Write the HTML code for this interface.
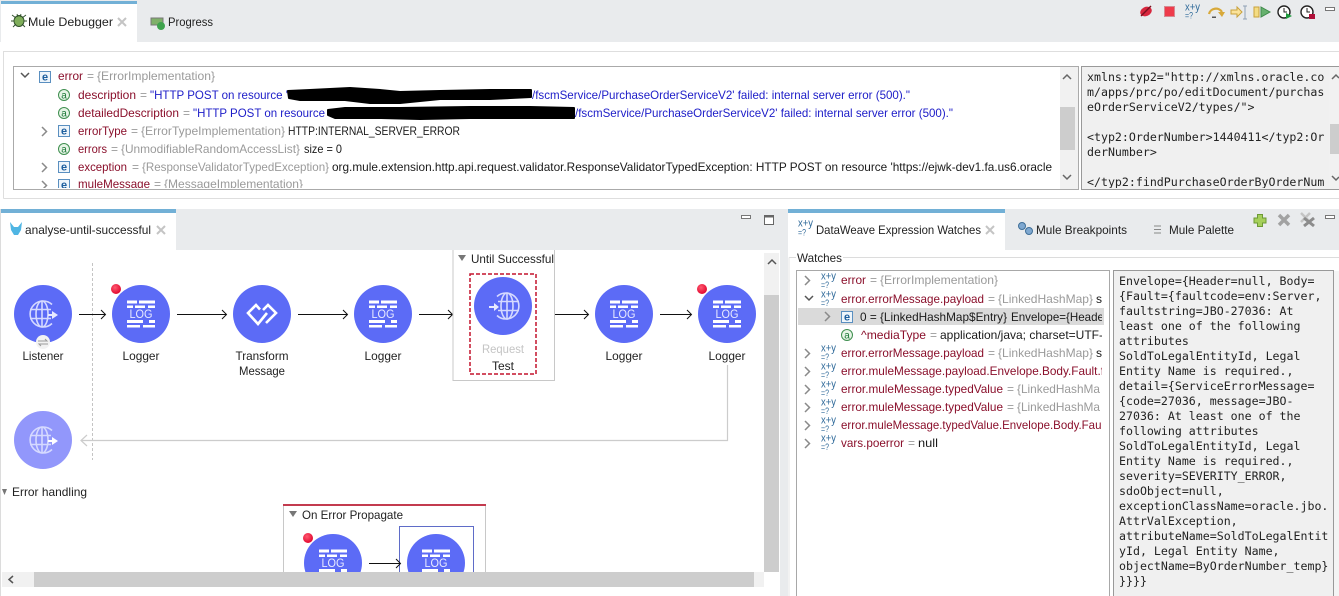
<!DOCTYPE html>
<html><head><meta charset="utf-8"><title>Mule Debugger</title>
<style>
html,body{margin:0;padding:0;background:#fff;width:1339px;height:596px;overflow:hidden}
svg{display:block}
text{font-family:"Liberation Sans",sans-serif;font-size:12px;fill:#222;white-space:pre}
.m{font-family:"DejaVu Sans Mono","Liberation Mono",monospace;font-size:11.6px;fill:#222}
.r{fill:#8a0f2b}.g{fill:#9a9a9a}.b{fill:#1c1cc8}.k{fill:#1a1a1a}
.e{font-size:11px;font-weight:bold;fill:#1e5f9e;text-anchor:middle}
.a{font-size:10px;fill:#1f7a3a;text-anchor:middle}
.x{font-size:11px;fill:#2f6a9a}
.q{font-size:9.5px;fill:#2f6a9a}
.log{font-size:11.5px;fill:#e8eaff;text-anchor:middle}
.c{text-anchor:middle}
.chev{fill:none;stroke:#8a8a8a;stroke-width:1.5}
</style></head><body>
<svg width="1339" height="596" viewBox="0 0 1339 596" xmlns="http://www.w3.org/2000/svg">
<defs>
<clipPath id="t1"><rect x="14" y="67" width="1045" height="121"/></clipPath>
<clipPath id="t2"><rect x="1082" y="67" width="246" height="121"/></clipPath>
<clipPath id="t3"><rect x="797" y="271" width="305" height="324"/></clipPath>
<radialGradient id="rd" cx="40%" cy="35%" r="70%"><stop offset="0" stop-color="#ff5a70"/><stop offset="1" stop-color="#e0002a"/></radialGradient>
<g id="bars" fill="#fff">
<rect x="-14" y="-13.5" width="10" height="3"/><rect x="-2" y="-13.5" width="16" height="3"/>
<rect x="-14" y="-8.5" width="6" height="2.5"/><rect x="-6" y="-8.5" width="10" height="2.5"/><rect x="7" y="-8.5" width="7" height="2.5"/>
<rect x="-14" y="6" width="16" height="3"/><rect x="8" y="6" width="6" height="3"/>
<rect x="-14" y="11" width="13" height="2.5"/><rect x="2" y="11" width="12" height="2.5"/>
</g>
<g id="globe" fill="none" stroke="#d5d9ff" stroke-width="1.6">
<path d="M9 -9.5A13 13 0 1 0 9 9.5"/>
<ellipse cx="-1" cy="0" rx="6" ry="13"/>
<path d="M-1 -13V13M-13 -4.5H8M-13 4.5H8"/>
</g>
</defs>

<!-- top tab bar -->
<rect x="0" y="0" width="1339" height="42" fill="#e9ebed"/>
<rect x="1" y="1" width="136" height="41" fill="#fff"/>
<rect x="1" y="1" width="136" height="3" fill="#72b0d6"/>
<g fill="#7fae5a" stroke="#2f4f2a" stroke-width=".9"><ellipse cx="19" cy="21" rx="5" ry="5.500"/><path d="M12 15l4 3M26 15l-4 3M11 21h3M27 21h-3M13 27l3-3M25 27l-3-3M17 14l1 3M21 14l-1 3" fill="none"/></g>
<text x="28" y="26" textLength="85" lengthAdjust="spacingAndGlyphs">Mule Debugger</text>
<path d="M118 18l8 8M126 18l-8 8" stroke="#c4c4c4" stroke-width="2"/>
<rect x="151" y="18" width="12" height="7" fill="#7fb069" stroke="#777"/><circle cx="161" cy="26" r="4" fill="#3fa34d"/>
<text x="168" y="26" textLength="45" lengthAdjust="spacingAndGlyphs">Progress</text>

<!-- debug toolbar -->
<ellipse cx="1146" cy="11.500" rx="6" ry="4.500" fill="#d7263d" transform="rotate(-25 1146 11.500)"/><path d="M1141 16l10-10" stroke="#7a1020" stroke-width="1.400"/>
<rect x="1164.500" y="6.500" width="10" height="10" fill="#ee3b4b" stroke="#d58a92"/>
<text class="x" x="1185" y="10.500" textLength="15" lengthAdjust="spacingAndGlyphs">x+y</text>
<text class="q" x="1185" y="18.500" textLength="8" lengthAdjust="spacingAndGlyphs">=?</text>
<path d="M1209 14a7 6.500 0 0 1 13 -2" fill="none" stroke="#d8a93a" stroke-width="2.200"/><path d="M1218 12h7l-3 5z" fill="#d8a93a"/><rect x="1212" y="16.500" width="4" height="1.500" fill="#555"/>
<path d="M1231 10h6v-3l5 5-5 5v-3h-6z" fill="#fbe39a" stroke="#c9a23c"/><path d="M1243 6h4M1243 19h4M1245 6v13" fill="none" stroke="#8fa0b5"/>
<rect x="1254" y="7" width="5" height="10" fill="#f4dc84" stroke="#c9a23c"/><path d="M1261 7l9 5-9 5z" fill="#66b16e" stroke="#3f8a4a"/>
<circle cx="1284" cy="12" r="6" fill="#fff" stroke="#222" stroke-width="1.400"/><path d="M1284 8v4h3" fill="none" stroke="#222"/><path d="M1286 13l6 3-6 3z" fill="#1f9a3d"/>
<circle cx="1307" cy="12" r="6" fill="#fff" stroke="#222" stroke-width="1.400"/><path d="M1307 8v4h3" fill="none" stroke="#222"/><rect x="1309" y="14" width="6" height="5" fill="#b0103a"/>
<rect x="1325.500" y="7.500" width="9" height="3" fill="#fff" stroke="#777"/>

<!-- top panel -->
<rect x="0" y="42" width="1339" height="167" fill="#fff"/>
<path d="M3.500 198.500V51.500H1339M3.500 198.500H1339" fill="none" stroke="#dedede"/>
<rect x="13.500" y="66.500" width="1065" height="123" fill="#fff" stroke="#aaa"/>
<rect x="1060" y="67" width="18" height="122" fill="#f1f1f1"/>
<rect x="1060" y="107" width="15" height="43" fill="#cdcdcd"/>
<path d="M1063 79l4-4 4 4M1063 175l4 4 4-4" fill="none" stroke="#666" stroke-width="1.500"/>

<g clip-path="url(#t1)">
<path d="M21 73l4 4 4-4" class="chev" style="stroke:#555"/>
<rect x="39.500" y="71.500" width="11" height="11" fill="#eef5fb" stroke="#5a8fc0"/><text class="e" x="45" y="80.500">e</text>
<text class="r" x="58" y="80" textLength="25" lengthAdjust="spacingAndGlyphs">error</text><text class="g" x="87" y="80">=</text><text class="g" x="97" y="80" textLength="118" lengthAdjust="spacingAndGlyphs">{ErrorImplementation}</text>

<circle cx="64" cy="95" r="5.500" fill="#e6f4e6" stroke="#3f8f4f"/><text class="a" x="64" y="98.500">a</text>
<text class="r" x="78" y="99" textLength="58" lengthAdjust="spacingAndGlyphs">description</text><text class="g" x="140" y="99">=</text>
<text class="b" x="150" y="99" textLength="138" lengthAdjust="spacingAndGlyphs">"HTTP POST on resource '</text>
<text class="b" x="532" y="99" textLength="378" lengthAdjust="spacingAndGlyphs">/fscmService/PurchaseOrderServiceV2' failed: internal server error (500)."</text>

<circle cx="64" cy="113" r="5.500" fill="#e6f4e6" stroke="#3f8f4f"/><text class="a" x="64" y="116.500">a</text>
<text class="r" x="78" y="117" textLength="101" lengthAdjust="spacingAndGlyphs">detailedDescription</text><text class="g" x="183" y="117">=</text>
<text class="b" x="193" y="117" textLength="132" lengthAdjust="spacingAndGlyphs">"HTTP POST on resource</text>
<text class="b" x="575" y="117" textLength="378" lengthAdjust="spacingAndGlyphs">/fscmService/PurchaseOrderServiceV2' failed: internal server error (500)."</text>

<path d="M42 127l4.500 4.500-4.500 4.500" class="chev"/>
<rect x="58.500" y="125.500" width="11" height="11" fill="#eef5fb" stroke="#5a8fc0"/><text class="e" x="64" y="134.500">e</text>
<text class="r" x="78" y="135" textLength="49" lengthAdjust="spacingAndGlyphs">errorType</text><text class="g" x="131" y="135">=</text><text class="g" x="141" y="135" textLength="144" lengthAdjust="spacingAndGlyphs">{ErrorTypeImplementation}</text>
<text class="k" x="288" y="135" textLength="172" lengthAdjust="spacingAndGlyphs">HTTP:INTERNAL_SERVER_ERROR</text>

<circle cx="64" cy="149" r="5.500" fill="#e6f4e6" stroke="#3f8f4f"/><text class="a" x="64" y="152.500">a</text>
<text class="r" x="78" y="153" textLength="29" lengthAdjust="spacingAndGlyphs">errors</text><text class="g" x="111" y="153">=</text><text class="g" x="121" y="153" textLength="179" lengthAdjust="spacingAndGlyphs">{UnmodifiableRandomAccessList}</text>
<text class="k" x="304" y="153" textLength="38" lengthAdjust="spacingAndGlyphs">size = 0</text>

<path d="M42 163l4.500 4.500-4.500 4.500" class="chev"/>
<rect x="58.500" y="161.500" width="11" height="11" fill="#eef5fb" stroke="#5a8fc0"/><text class="e" x="64" y="170.500">e</text>
<text class="r" x="78" y="171" textLength="49" lengthAdjust="spacingAndGlyphs">exception</text><text class="g" x="132" y="171">=</text><text class="g" x="142" y="171" textLength="187" lengthAdjust="spacingAndGlyphs">{ResponseValidatorTypedException}</text>
<text class="k" x="332" y="171" textLength="720" lengthAdjust="spacingAndGlyphs">org.mule.extension.http.api.request.validator.ResponseValidatorTypedException: HTTP POST on resource 'https://ejwk-dev1.fa.us6.oracle</text>

<path d="M42 181l4.500 4.500-4.500 4.500" class="chev"/>
<rect x="58.500" y="179.500" width="11" height="11" fill="#eef5fb" stroke="#5a8fc0"/><text class="e" x="64" y="188.500">e</text>
<text class="r" x="78" y="188" textLength="72" lengthAdjust="spacingAndGlyphs">muleMessage</text><text class="g" x="154" y="188">=</text><text class="g" x="164" y="188" textLength="139" lengthAdjust="spacingAndGlyphs">{MessageImplementation}</text>
</g>

<path d="M288 91L310 90L350 88L380 90L400 92L440 91L490 90L531 90L531 97L490 99L440 99L400 103L370 103L345 100L300 100L289 98Z" fill="#000" stroke="#000" stroke-width="2" stroke-linejoin="round"/>
<path d="M328 110L345 108L400 108L470 107L530 107L574 108L574 118L530 118L470 118L420 119L380 118L335 118L328 115Z" fill="#000" stroke="#000" stroke-width="2" stroke-linejoin="round"/>

<rect x="1081.500" y="66.500" width="257.500" height="123" fill="#f0f0f0" stroke="#999"/>
<g clip-path="url(#t2)">
<text class="m" x="1087" y="81">xmlns:typ2="http://xmlns.oracle.co</text>
<text class="m" x="1087" y="96">m/apps/prc/po/editDocument/purchas</text>
<text class="m" x="1087" y="111">eOrderServiceV2/types/"&gt;</text>
<text class="m" x="1087" y="141">&lt;typ2:OrderNumber&gt;1440411&lt;/typ2:Or</text>
<text class="m" x="1087" y="156">derNumber&gt;</text>
<text class="m" x="1087" y="186">&lt;/typ2:findPurchaseOrderByOrderNum</text>
</g>
<rect x="1329" y="67" width="10" height="122" fill="#f1f1f1"/>
<rect x="1330" y="124" width="9" height="30" fill="#cdcdcd"/>
<path d="M1332 79l4-4 3 3M1332 176l4 4 3-3" fill="none" stroke="#666" stroke-width="1.500"/>

<!-- editor tabs -->
<rect x="0" y="209" width="1339" height="387" fill="#e9ebed"/>
<rect x="0" y="209" width="1" height="387" fill="#dcdcdc"/>
<rect x="1" y="209" width="175" height="41" fill="#fff"/>
<rect x="1" y="209" width="175" height="4" fill="#72b0d6"/>
<path d="M10 222l4 5h4l4-5-1 8-3 5h-4l-3-5z" fill="#4fb5e3"/>
<text x="25" y="234" textLength="126" lengthAdjust="spacingAndGlyphs">analyse-until-successful</text>
<path d="M157 226l8 8M165 226l-8 8" stroke="#c4c4c4" stroke-width="2"/>
<rect x="741.500" y="215.500" width="9" height="3" fill="#fff" stroke="#777"/>
<rect x="764.500" y="215.500" width="9" height="9" fill="#fff" stroke="#666"/><rect x="764" y="215" width="10" height="2.500" fill="#666"/>

<!-- canvas -->
<rect x="1" y="250" width="779" height="346" fill="#fff"/>
<rect x="764" y="253" width="15" height="319" fill="#f1f1f1"/>
<rect x="764" y="295" width="15" height="277" fill="#cdcdcd"/>
<path d="M768 264l4-4 4 4" fill="none" stroke="#555" stroke-width="1.500"/>

<line x1="92.500" y1="263" x2="92.500" y2="460" stroke="#c4c4c4" stroke-dasharray="3 2"/>
<path d="M727.500 365V440.500H81" fill="none" stroke="#cccccc" stroke-width="1.200"/>
<path d="M87 435l-6 5.500 6 5.500" fill="none" stroke="#cccccc" stroke-width="1.200"/>

<!-- arrows -->
<g fill="none" stroke="#111" stroke-width="1">
<path d="M79 314.500H105M101 310l4.500 4.500-4.500 4.500"/>
<path d="M177 314.500H226M222 310l4.500 4.500-4.500 4.500"/>
<path d="M298 314.500H347M343 310l4.500 4.500-4.500 4.500"/>
<path d="M419 314.500H452M448 310l4.500 4.500-4.500 4.500"/>
<path d="M555 314.500H588M584 310l4.500 4.500-4.500 4.500"/>
<path d="M660 314.500H691M687 310l4.500 4.500-4.500 4.500"/>
</g>

<!-- until successful frame -->
<path d="M453 250V380.500H554.500V250" fill="none" stroke="#c8c8c8" stroke-width="1"/>
<path d="M458 255h8l-4 6z" fill="#777"/>
<text x="471" y="263" textLength="83" lengthAdjust="spacingAndGlyphs">Until Successful</text>
<rect x="470" y="274" width="66" height="100" fill="none" stroke="#c3142d" stroke-width="1.500" stroke-dasharray="4 2"/>

<!-- nodes -->
<circle cx="43" cy="314" r="29" fill="#5c6bf6"/>
<use href="#globe" x="43" y="314"/><path d="M48 314h4v-3l6 4-6 4v-3h-4z" fill="#e8eaff"/>
<circle cx="43" cy="342" r="7" fill="#f2f2f2"/><path d="M38 341h9l-2-2M48 344h-9l2 2" fill="none" stroke="#999"/>
<text class="c" x="43" y="360" textLength="41" lengthAdjust="spacingAndGlyphs">Listener</text>

<circle cx="141" cy="314" r="29" fill="#5c6bf6"/><use href="#bars" x="141" y="314"/><text class="log" x="141" y="318" textLength="23" lengthAdjust="spacingAndGlyphs">LOG</text>
<text class="c" x="141" y="360" textLength="37" lengthAdjust="spacingAndGlyphs">Logger</text>
<circle cx="116" cy="289" r="5" fill="url(#rd)"/>

<circle cx="262" cy="314" r="29" fill="#5c6bf6"/>
<path d="M260 309.500L256 305L248 313L258 324L267 313M266 323L276 313L268 305L263 310" fill="none" stroke="#fff" stroke-width="2.600"/>
<text class="c" x="262" y="360" textLength="53" lengthAdjust="spacingAndGlyphs">Transform</text>
<text class="c" x="262" y="375" textLength="46" lengthAdjust="spacingAndGlyphs">Message</text>

<circle cx="383" cy="314" r="29" fill="#5c6bf6"/><use href="#bars" x="383" y="314"/><text class="log" x="383" y="318" textLength="23" lengthAdjust="spacingAndGlyphs">LOG</text>
<text class="c" x="383" y="360" textLength="37" lengthAdjust="spacingAndGlyphs">Logger</text>

<circle cx="503" cy="306" r="29" fill="#5c6bf6"/>
<g transform="translate(506,306) scale(-1,1)"><use href="#globe"/></g><path d="M489 306h5v-3l5 4-5 4v-3h-5z" fill="#e8eaff"/>
<text class="c" x="503" y="353" textLength="42" lengthAdjust="spacingAndGlyphs" style="fill:#c4c4c4">Request</text>
<text class="c" x="503" y="370" textLength="22" lengthAdjust="spacingAndGlyphs">Test</text>

<circle cx="624" cy="314" r="29" fill="#5c6bf6"/><use href="#bars" x="624" y="314"/><text class="log" x="624" y="318" textLength="23" lengthAdjust="spacingAndGlyphs">LOG</text>
<text class="c" x="624" y="360" textLength="37" lengthAdjust="spacingAndGlyphs">Logger</text>

<circle cx="727" cy="314" r="29" fill="#5c6bf6"/><use href="#bars" x="727" y="314"/><text class="log" x="727" y="318" textLength="23" lengthAdjust="spacingAndGlyphs">LOG</text>
<text class="c" x="727" y="360" textLength="37" lengthAdjust="spacingAndGlyphs">Logger</text>
<circle cx="702" cy="289" r="5" fill="url(#rd)"/>

<circle cx="43" cy="440" r="29" fill="#9297fb"/>
<use href="#globe" x="43" y="440"/><path d="M48 440h4v-3l6 4-6 4v-3h-4z" fill="#fff"/>

<path d="M2 489h5l-2.500 6z" fill="#777"/>
<text x="12" y="496" textLength="75" lengthAdjust="spacingAndGlyphs">Error handling</text>

<!-- on error propagate -->
<path d="M283.500 505V572M485.500 505V572" stroke="#c8c8c8"/>
<rect x="283" y="504" width="203" height="2" fill="#c33b4f"/>
<path d="M289 511h8l-4 6z" fill="#777"/>
<text x="302" y="519" textLength="101" lengthAdjust="spacingAndGlyphs">On Error Propagate</text>
<rect x="399.500" y="526.500" width="74" height="48" fill="none" stroke="#5f6cc8"/>
<circle cx="333" cy="563" r="29" fill="#5c6bf6"/><use href="#bars" x="333" y="563"/><text class="log" x="333" y="567" textLength="23" lengthAdjust="spacingAndGlyphs">LOG</text>
<circle cx="436" cy="563" r="29" fill="#5c6bf6"/><use href="#bars" x="436" y="563"/><text class="log" x="436" y="567" textLength="23" lengthAdjust="spacingAndGlyphs">LOG</text>
<circle cx="308" cy="538" r="5" fill="url(#rd)"/>
<path d="M369 563.500H400M396 559l4.500 4.500-4.500 4.500" fill="none" stroke="#111"/>

<!-- h scrollbar -->
<rect x="1" y="572" width="779" height="24" fill="#fff"/>
<rect x="2" y="572" width="762" height="15" fill="#f1f1f1"/>
<rect x="34" y="572" width="720" height="15" fill="#cdcdcd"/>
<path d="M13 576l-4 3.500 4 3.500" fill="none" stroke="#555" stroke-width="1.500"/>

<!-- right pane -->
<rect x="788" y="250" width="551" height="346" fill="#fff"/>
<rect x="788" y="209" width="217" height="41" fill="#fff"/>
<rect x="788" y="209" width="217" height="4" fill="#72b0d6"/>
<text class="x" x="798" y="226.500" textLength="15" lengthAdjust="spacingAndGlyphs">x+y</text>
<text class="q" x="798" y="235.500" textLength="8" lengthAdjust="spacingAndGlyphs">=?</text>
<text x="816" y="234" textLength="165" lengthAdjust="spacingAndGlyphs">DataWeave Expression Watches</text>
<path d="M986 226l8 8M994 226l-8 8" stroke="#c4c4c4" stroke-width="2"/>
<circle cx="1022" cy="226" r="3.500" fill="#7fa8d0" stroke="#3f6f99"/><circle cx="1029" cy="231" r="3.500" fill="#7fa8d0" stroke="#3f6f99"/>
<text x="1036" y="234" textLength="91" lengthAdjust="spacingAndGlyphs">Mule Breakpoints</text>
<path d="M1154 226h7M1154 229.500h7M1154 233h7" stroke="#888"/>
<text x="1169" y="234" textLength="65" lengthAdjust="spacingAndGlyphs">Mule Palette</text>
<path d="M1257.500 214.500h5v3.500h3.500v5h-3.500v3.500h-5v-3.500h-3.500v-5h3.500z" fill="#a5cf5a" stroke="#6d9a35"/>
<path d="M1279 215l10 10M1289 215l-10 10" stroke="#a2a2a2" stroke-width="3.500"/>
<path d="M1301 213l9 9M1310 213l-9 9" stroke="#c4c4c4" stroke-width="2.500"/><path d="M1304 218l10 8M1314 218l-10 8" stroke="#8c8c8c" stroke-width="3"/>
<rect x="1325.500" y="215.500" width="9" height="3" fill="#fff" stroke="#777"/>

<path d="M789 257.500H796M843 257.500H1339" stroke="#dcdcdc"/>
<path d="M789 257.500V596" stroke="#e4e4e4"/>
<text x="797" y="262" textLength="45" lengthAdjust="spacingAndGlyphs">Watches</text>
<rect x="796.500" y="270.500" width="313" height="326" fill="#fff" stroke="#a8a8a8"/>
<rect x="798" y="308" width="306" height="17" fill="#dadada"/>

<g clip-path="url(#t3)">
<path d="M805 276l4.500 4.500-4.500 4.500" class="chev"/>
<text class="x" x="821" y="279.500" textLength="15" lengthAdjust="spacingAndGlyphs">x+y</text><text class="q" x="821" y="288" textLength="8" lengthAdjust="spacingAndGlyphs">=?</text>
<text class="r" x="841" y="284" textLength="25" lengthAdjust="spacingAndGlyphs">error</text><text class="g" x="870" y="284">=</text><text class="g" x="880" y="284" textLength="118" lengthAdjust="spacingAndGlyphs">{ErrorImplementation}</text>

<path d="M805 296l4 4 4-4" class="chev" style="stroke:#555"/>
<text class="x" x="821" y="297.500" textLength="15" lengthAdjust="spacingAndGlyphs">x+y</text><text class="q" x="821" y="306" textLength="8" lengthAdjust="spacingAndGlyphs">=?</text>
<text class="r" x="841" y="303" textLength="143" lengthAdjust="spacingAndGlyphs">error.errorMessage.payload</text><text class="g" x="988" y="303">=</text><text class="g" x="998" y="303" textLength="95" lengthAdjust="spacingAndGlyphs">{LinkedHashMap}</text><text class="k" x="1096" y="303">s</text>

<path d="M825 312l4.500 4.500-4.500 4.500" class="chev"/>
<rect x="841.500" y="311.500" width="11" height="11" fill="#eef5fb" stroke="#5a8fc0"/><text class="e" x="847" y="320.500">e</text>
<text class="k" x="860" y="321" textLength="147" lengthAdjust="spacingAndGlyphs">0 = {LinkedHashMap$Entry}</text><text class="k" x="1011" y="321" textLength="93" lengthAdjust="spacingAndGlyphs">Envelope={Heade</text>

<circle cx="847" cy="335" r="5.500" fill="#e6f4e6" stroke="#3f8f4f"/><text class="a" x="847" y="338.500">a</text>
<text class="r" x="861" y="339" textLength="65" lengthAdjust="spacingAndGlyphs">^mediaType</text><text class="g" x="930" y="339">=</text><text class="k" x="940" y="339" textLength="163" lengthAdjust="spacingAndGlyphs">application/java; charset=UTF-</text>

<path d="M805 349l4.500 4.500-4.500 4.500" class="chev"/>
<text class="x" x="821" y="351.500" textLength="15" lengthAdjust="spacingAndGlyphs">x+y</text><text class="q" x="821" y="360" textLength="8" lengthAdjust="spacingAndGlyphs">=?</text>
<text class="r" x="841" y="357" textLength="143" lengthAdjust="spacingAndGlyphs">error.errorMessage.payload</text><text class="g" x="988" y="357">=</text><text class="g" x="998" y="357" textLength="95" lengthAdjust="spacingAndGlyphs">{LinkedHashMap}</text><text class="k" x="1096" y="357">s</text>

<path d="M805 367l4.500 4.500-4.500 4.500" class="chev"/>
<text class="x" x="821" y="369.500" textLength="15" lengthAdjust="spacingAndGlyphs">x+y</text><text class="q" x="821" y="378" textLength="8" lengthAdjust="spacingAndGlyphs">=?</text>
<text class="r" x="841" y="375" textLength="263" lengthAdjust="spacingAndGlyphs">error.muleMessage.payload.Envelope.Body.Fault.f</text>

<path d="M805 385l4.500 4.500-4.500 4.500" class="chev"/>
<text class="x" x="821" y="387.500" textLength="15" lengthAdjust="spacingAndGlyphs">x+y</text><text class="q" x="821" y="396" textLength="8" lengthAdjust="spacingAndGlyphs">=?</text>
<text class="r" x="841" y="393" textLength="162" lengthAdjust="spacingAndGlyphs">error.muleMessage.typedValue</text><text class="g" x="1007" y="393">=</text><text class="g" x="1017" y="393" textLength="83" lengthAdjust="spacingAndGlyphs">{LinkedHashMa</text>

<path d="M805 403l4.500 4.500-4.500 4.500" class="chev"/>
<text class="x" x="821" y="405.500" textLength="15" lengthAdjust="spacingAndGlyphs">x+y</text><text class="q" x="821" y="414" textLength="8" lengthAdjust="spacingAndGlyphs">=?</text>
<text class="r" x="841" y="411" textLength="162" lengthAdjust="spacingAndGlyphs">error.muleMessage.typedValue</text><text class="g" x="1007" y="411">=</text><text class="g" x="1017" y="411" textLength="83" lengthAdjust="spacingAndGlyphs">{LinkedHashMa</text>

<path d="M805 421l4.500 4.500-4.500 4.500" class="chev"/>
<text class="x" x="821" y="423.500" textLength="15" lengthAdjust="spacingAndGlyphs">x+y</text><text class="q" x="821" y="432" textLength="8" lengthAdjust="spacingAndGlyphs">=?</text>
<text class="r" x="841" y="429" textLength="263" lengthAdjust="spacingAndGlyphs">error.muleMessage.typedValue.Envelope.Body.Faul</text>

<path d="M805 439l4.500 4.500-4.500 4.500" class="chev"/>
<text class="x" x="821" y="441.500" textLength="15" lengthAdjust="spacingAndGlyphs">x+y</text><text class="q" x="821" y="450" textLength="8" lengthAdjust="spacingAndGlyphs">=?</text>
<text class="r" x="841" y="447" textLength="63" lengthAdjust="spacingAndGlyphs">vars.poerror</text><text class="g" x="908" y="447">=</text><text class="k" x="918" y="447" textLength="20" lengthAdjust="spacingAndGlyphs">null</text>
</g>

<rect x="1113.500" y="270.500" width="220" height="326" fill="#f0f0f0" stroke="#999"/>
<rect x="1334" y="271" width="5" height="325" fill="#f4f4f4"/>
<g>
<text class="m" x="1119" y="285">Envelope={Header=null, Body=</text>
<text class="m" x="1119" y="300">{Fault={faultcode=env:Server,</text>
<text class="m" x="1119" y="315">faultstring=JBO-27036: At</text>
<text class="m" x="1119" y="330">least one of the following</text>
<text class="m" x="1119" y="345">attributes</text>
<text class="m" x="1119" y="360">SoldToLegalEntityId, Legal</text>
<text class="m" x="1119" y="375">Entity Name is required.,</text>
<text class="m" x="1119" y="390">detail={ServiceErrorMessage=</text>
<text class="m" x="1119" y="405">{code=27036, message=JBO-</text>
<text class="m" x="1119" y="420">27036: At least one of the</text>
<text class="m" x="1119" y="435">following attributes</text>
<text class="m" x="1119" y="450">SoldToLegalEntityId, Legal</text>
<text class="m" x="1119" y="465">Entity Name is required.,</text>
<text class="m" x="1119" y="480">severity=SEVERITY_ERROR,</text>
<text class="m" x="1119" y="495">sdoObject=null,</text>
<text class="m" x="1119" y="510">exceptionClassName=oracle.jbo.</text>
<text class="m" x="1119" y="525">AttrValException,</text>
<text class="m" x="1119" y="540">attributeName=SoldToLegalEntit</text>
<text class="m" x="1119" y="555">yId, Legal Entity Name,</text>
<text class="m" x="1119" y="570">objectName=ByOrderNumber_temp}</text>
<text class="m" x="1119" y="585">}}}}</text>
</g>
</svg>
</body></html>
